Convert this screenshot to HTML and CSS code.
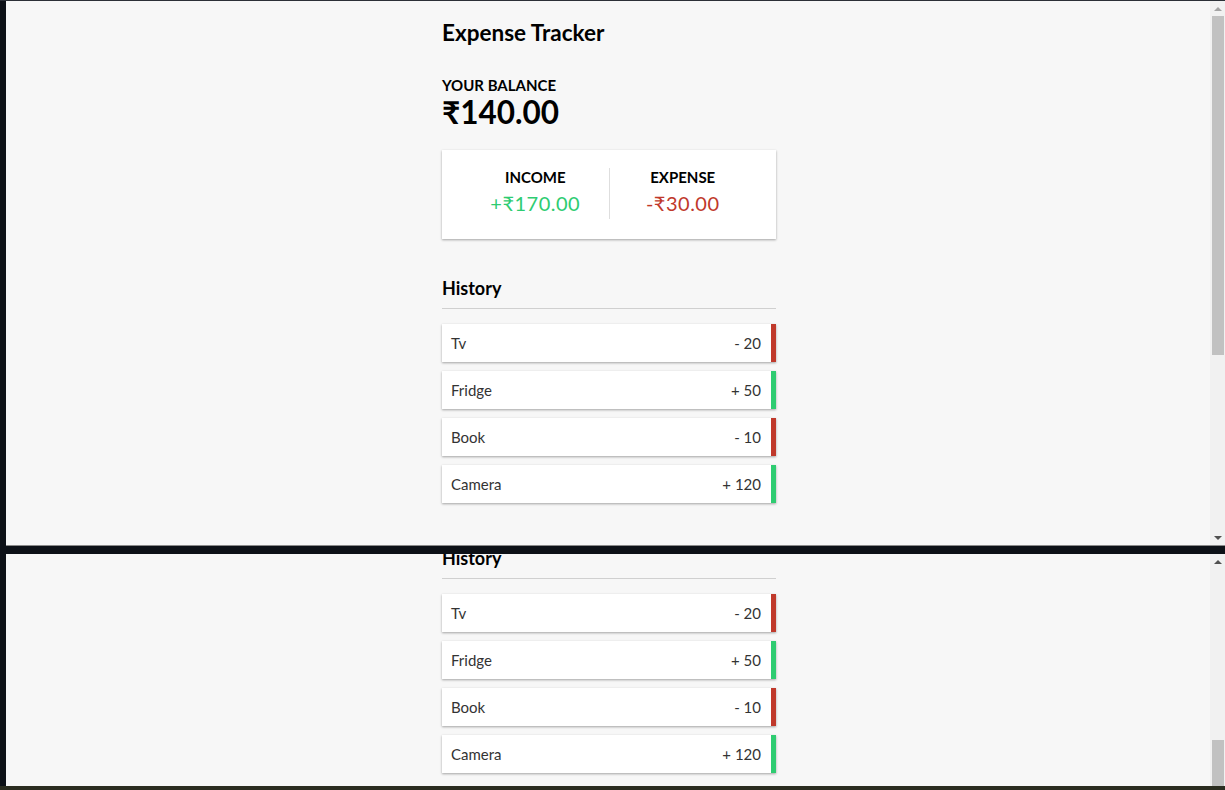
FILE: index.html
```html
<!DOCTYPE html>
<html lang="en">
<head>
<meta charset="UTF-8">
<title>Expense Tracker</title>
<link rel="stylesheet" href="styles.css">
</head>
<body>
<div class="screen">
  <div class="topline"></div>
  <div class="middle">
    <div class="left-strip"></div>
    <div class="windows">
      <div class="window win-top">
        <div class="viewport">
          <div class="page">
            <div class="container">
              <h1 class="title">Expense Tracker</h1>
              <h4 class="label">Your Balance</h4>
              <h1 class="balance">₹140.00</h1>
              <div class="inc-exp">
                <div class="col col-first">
                  <h4 class="label">Income</h4>
                  <p class="money plus">+₹170.00</p>
                </div>
                <div class="col">
                  <h4 class="label">Expense</h4>
                  <p class="money minus">-₹30.00</p>
                </div>
              </div>
              <h3 class="history">History</h3>
              <ul class="list">
                <li class="item minus"><span>Tv</span><span>- 20</span></li>
                <li class="item plus"><span>Fridge</span><span>+ 50</span></li>
                <li class="item minus"><span>Book</span><span>- 10</span></li>
                <li class="item plus"><span>Camera</span><span>+ 120</span></li>
              </ul>
            </div>
          </div>
        </div>
        <div class="scrollbar">
          <div class="arrow up faint"></div>
          <div class="track"><div class="thumb thumb-top"></div></div>
          <div class="arrow down"></div>
        </div>
      </div>
      <div class="band"></div>
      <div class="window win-bottom">
        <div class="viewport">
          <div class="page scrolled">
            <div class="container">
              <h1 class="title">Expense Tracker</h1>
              <h4 class="label">Your Balance</h4>
              <h1 class="balance">₹140.00</h1>
              <div class="inc-exp">
                <div class="col col-first">
                  <h4 class="label">Income</h4>
                  <p class="money plus">+₹170.00</p>
                </div>
                <div class="col">
                  <h4 class="label">Expense</h4>
                  <p class="money minus">-₹30.00</p>
                </div>
              </div>
              <h3 class="history">History</h3>
              <ul class="list">
                <li class="item minus"><span>Tv</span><span>- 20</span></li>
                <li class="item plus"><span>Fridge</span><span>+ 50</span></li>
                <li class="item minus"><span>Book</span><span>- 10</span></li>
                <li class="item plus"><span>Camera</span><span>+ 120</span></li>
              </ul>
            </div>
          </div>
        </div>
        <div class="scrollbar">
          <div class="arrow up"></div>
          <div class="track track-bottom"><div class="thumb thumb-bottom"></div></div>
        </div>
      </div>
    </div>
  </div>
  <div class="taskbar"></div>
</div>
</body>
</html>
```

FILE: styles.css
```css
* { box-sizing: border-box; }

html, body {
  margin: 0;
  padding: 0;
  width: 1225px;
  height: 790px;
  overflow: hidden;
  background: #0d1117;
  font-family: "Lato", "Noto Sans", sans-serif;
}

.screen {
  display: flex;
  flex-direction: column;
  width: 1225px;
  height: 790px;
}

.topline {
  height: 1px;
  background: #2c3037;
  flex: none;
}

.middle {
  flex: 1;
  display: flex;
  min-height: 0;
}

.left-strip {
  width: 6px;
  background: #0d1117;
  flex: none;
}

.windows {
  flex: 1;
  display: flex;
  flex-direction: column;
  min-width: 0;
}

.window {
  display: flex;
  background: #f7f7f7;
  overflow: hidden;
}

.win-top {
  height: 545px;
  border-bottom: 1px solid #8a8a8a;
  flex: none;
}

.band {
  height: 8px;
  background: #0d1117;
  flex: none;
}

.win-bottom {
  flex: 1;
}

.taskbar {
  height: 4px;
  background: #2b2d20;
  flex: none;
}

.viewport {
  flex: 1;
  overflow: hidden;
}

.page {
  display: flex;
  justify-content: center;
}

.page.scrolled {
  margin-top: -283px;
}

.container {
  width: 334px;
  margin-left: 2px;
  padding-top: 17px;
  color: #000;
}

.title {
  font-size: 22.5px;
  font-weight: 700;
  margin: 0;
  line-height: 29px;
}

.label {
  font-size: 15px;
  font-weight: 700;
  text-transform: uppercase;
  margin: 0;
  line-height: 19px;
}

.container > .label {
  margin-top: 29px;
}

.balance {
  font-size: 31.5px;
  font-weight: 700;
  margin: -2px 0 0;
  line-height: 38px;
}

.inc-exp {
  background: #fff;
  box-shadow: 0 1px 3px rgba(0,0,0,0.12), 0 1px 2px rgba(0,0,0,0.24);
  padding: 18px 20px 20px;
  display: flex;
  margin: 19px 0 0;
  height: 89px;
}

.col {
  flex: 1;
  text-align: center;
}

.col-first {
  border-right: 1px solid #dedede;
}

.money {
  font-size: 20px;
  letter-spacing: 0.5px;
  margin: 4px 0 0;
  line-height: 24px;
}

.money.plus { color: #2ecc71; }
.money.minus { color: #c0392b; }

.history {
  font-size: 18px;
  font-weight: 700;
  margin: 38px 0 15px;
  padding-bottom: 9px;
  line-height: 22px;
  border-bottom: 1px solid #d0d0d0;
}

.list {
  list-style: none;
  padding: 0;
  margin: 0;
  display: flex;
  flex-direction: column;
  gap: 9px;
}

.item {
  background: #fff;
  box-shadow: 0 1px 3px rgba(0,0,0,0.12), 0 1px 2px rgba(0,0,0,0.24);
  color: #333;
  display: flex;
  justify-content: space-between;
  padding: 10px 10px 10px 9px;
  font-size: 15px;
  line-height: 18px;
}

.item.plus { border-right: 5px solid #2ecc71; }
.item.minus { border-right: 5px solid #c0392b; }

.scrollbar {
  width: 15px;
  flex: none;
  background: #f1f1f1;
  display: flex;
  flex-direction: column;
}

.arrow {
  height: 15px;
  flex: none;
  display: flex;
  align-items: center;
  justify-content: center;
}

.arrow::before {
  content: "";
  width: 0;
  height: 0;
  border-left: 4px solid transparent;
  border-right: 4px solid transparent;
}

.arrow.up::before {
  border-bottom: 4px solid #505050;
}

.arrow.up.faint::before {
  border-bottom-color: #a3a3a3;
}

.arrow.down::before {
  border-top: 4px solid #505050;
}

.track {
  flex: 1;
  display: flex;
  flex-direction: column;
  padding: 0 1px 0 2px;
}

.thumb {
  background: #c1c1c1;
}

.thumb-top {
  height: 339px;
}

.track-bottom {
  justify-content: flex-end;
}

.thumb-bottom {
  height: 46px;
}
```
